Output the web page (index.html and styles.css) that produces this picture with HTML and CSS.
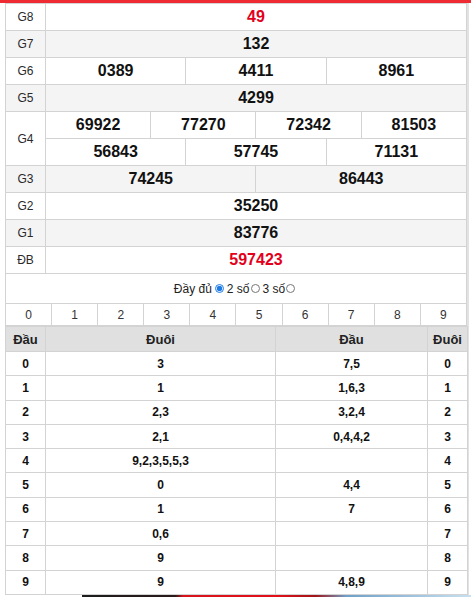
FILE: index.html
```html
<!DOCTYPE html>
<html lang="vi">
<head>
<meta charset="utf-8">
<link rel="stylesheet" href="styles.css">
</head>
<body>
<div class="topbar"></div>
<div class="box">
  <table class="kq">
    <colgroup>
      <col class="c-label">
      <col><col><col><col><col><col><col><col><col><col><col><col>
    </colgroup>
    <tr><td class="lbl">G8</td><td colspan="12" class="num red">49</td></tr>
    <tr class="alt"><td class="lbl">G7</td><td colspan="12" class="num">132</td></tr>
    <tr><td class="lbl">G6</td><td colspan="4" class="num">0389</td><td colspan="4" class="num">4411</td><td colspan="4" class="num">8961</td></tr>
    <tr class="alt"><td class="lbl">G5</td><td colspan="12" class="num">4299</td></tr>
    <tr><td class="lbl" rowspan="2">G4</td><td colspan="3" class="num">69922</td><td colspan="3" class="num">77270</td><td colspan="3" class="num">72342</td><td colspan="3" class="num">81503</td></tr>
    <tr><td colspan="4" class="num">56843</td><td colspan="4" class="num">57745</td><td colspan="4" class="num">71131</td></tr>
    <tr class="alt"><td class="lbl">G3</td><td colspan="6" class="num">74245</td><td colspan="6" class="num">86443</td></tr>
    <tr><td class="lbl">G2</td><td colspan="12" class="num">35250</td></tr>
    <tr class="alt"><td class="lbl">G1</td><td colspan="12" class="num">83776</td></tr>
    <tr><td class="lbl">ĐB</td><td colspan="12" class="num red">597423</td></tr>
  </table>
  <div class="opts">
    <span>Đầy đủ</span><input type="radio" name="n" class="rad" checked><span>2 số</span><input type="radio" name="n" class="rad rad-t"><span>3 số</span><input type="radio" name="n" class="rad rad-t">
  </div>
  <table class="digits">
    <tr><td>0</td><td>1</td><td>2</td><td>3</td><td>4</td><td>5</td><td>6</td><td>7</td><td>8</td><td>9</td></tr>
  </table>
  <table class="loto">
    <colgroup><col class="l1"><col class="l2"><col class="l3"><col class="l4"></colgroup>
    <tr class="head"><th>Đầu</th><th>Đuôi</th><th>Đầu</th><th>Đuôi</th></tr>
    <tr><td>0</td><td>3</td><td>7,5</td><td>0</td></tr>
    <tr><td>1</td><td>1</td><td>1,6,3</td><td>1</td></tr>
    <tr><td>2</td><td>2,3</td><td>3,2,4</td><td>2</td></tr>
    <tr><td>3</td><td>2,1</td><td>0,4,4,2</td><td>3</td></tr>
    <tr><td>4</td><td>9,2,3,5,5,3</td><td></td><td>4</td></tr>
    <tr><td>5</td><td>0</td><td>4,4</td><td>5</td></tr>
    <tr><td>6</td><td>1</td><td>7</td><td>6</td></tr>
    <tr><td>7</td><td>0,6</td><td></td><td>7</td></tr>
    <tr><td>8</td><td>9</td><td></td><td>8</td></tr>
    <tr><td>9</td><td>9</td><td>4,8,9</td><td>9</td></tr>
  </table>
</div>
<div class="banner"></div>
</body>
</html>
```
FILE: styles.css
```css
html, body {
  margin: 0;
  padding: 0;
  background: #fff;
  font-family: "Liberation Sans", Arial, sans-serif;
  color: #111;
}
.topbar {
  height: 3px;
  background: #ee2a33;
}
.box {
  margin-left: 5px;
  width: 462px;
  border-right: 2px solid #e2e2e2;
  box-sizing: content-box;
}
table {
  border-collapse: collapse;
  table-layout: fixed;
  width: 462px;
}
td, th {
  border: 1px solid #d3d3d3;
  padding: 0;
  text-align: center;
}
.c-label { width: 40px; }
.kq td { height: 26px; }
.kq tr.alt td { background: #f4f4f4; }
.lbl {
  font-size: 12px;
  color: #2a2a2a;
}
.num {
  font-size: 16px;
  font-weight: bold;
  color: #111;
}
.num.red { color: #e3001b; }
.opts {
  height: 29px;
  border-left: 1px solid #d3d3d3;
  border-right: 1px solid #d3d3d3;
  display: flex;
  align-items: center;
  justify-content: center;
  font-size: 12px;
  color: #222;
}
.rad {
  width: 9px;
  height: 9px;
  margin: 0 3px 0 3px;
  accent-color: #1e7be6;
}
.rad-t { margin-left: 1px; }
.digits td {
  height: 21px;
  font-size: 12px;
  color: #333;
}
.l1 { width: 40px; }
.l2 { width: 230px; }
.l3 { width: 152px; }
.l4 { width: 40px; }
.loto th {
  height: 24px;
  background: #e0e0e0;
  font-size: 13px;
  font-weight: bold;
  color: #222;
}
.loto td {
  height: 23.3px;
  font-size: 12px;
  font-weight: bold;
  color: #111;
}
.banner {
  margin-left: 82px;
  height: 3px;
  background: linear-gradient(90deg, #1d1d1d 0%, #2a1a1a 24%, #d8141c 26%, #e2101a 50%, #a01418 60%, #6fa0c8 68%, #c8e0f0 100%);
}
```
